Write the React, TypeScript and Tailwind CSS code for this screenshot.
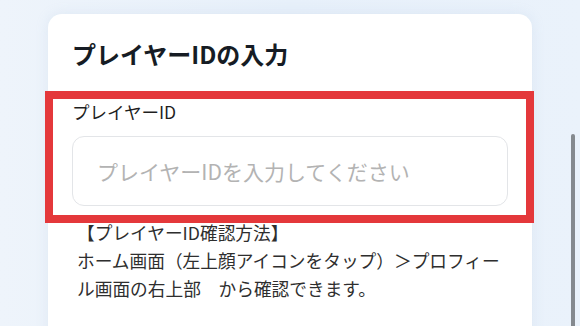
export default function App() {
  return (
    <div
      className="relative h-[326px] w-[580px] overflow-hidden bg-gradient-to-r from-[#eef4fb] via-[#e7f0fa] to-[#eaf2fb]"
      style={{ fontFamily: '"Noto Sans CJK JP", "Noto Sans", sans-serif' }}
    >
      <div className="ml-[48px] mt-[14px] w-[484px] rounded-t-[14px] bg-white px-[24px] pt-[24px] pb-[40px] shadow-[0_0_12px_rgba(180,200,225,0.25)]">
        {/* Title */}
        <h1 className="text-[24px] font-bold leading-[32px] text-[#161c24]">プレイヤーIDの入力</h1>

        {/* Highlighted field */}
        <div className="-ml-[27px] -mr-[26px] mt-[21px] border-[8px] border-[#e4383b] bg-white pl-[19px] pr-[18px] pt-0 pb-[9px]">
          <label className="block text-[17.5px] leading-[26px] text-[#1f1f1f]">プレイヤーID</label>
          <input
            type="text"
            placeholder="プレイヤーIDを入力してください"
            className="mt-[11px] block h-[70px] w-full rounded-[12px] border border-[#e3e5e8] bg-white px-[24px] text-[21px] text-[#333] placeholder:text-[#b3b3b3] focus:outline-none"
          />
        </div>

        {/* How to check */}
        <div className="-mr-[6px] mt-[-5px] pl-[5px] text-[17.7px] leading-[28px] text-[#2e2e2e]">
          <p>【プレイヤーID確認方法】</p>
          <p>ホーム画面（左上顔アイコンをタップ）＞プロフィール画面の右上部　から確認できます。</p>
        </div>
      </div>

      {/* overlay scrollbar */}
      <div className="absolute right-[5px] top-[134px] h-[200px] w-[4px] rounded-full bg-[#858a8f]" />
    </div>
  );
}
